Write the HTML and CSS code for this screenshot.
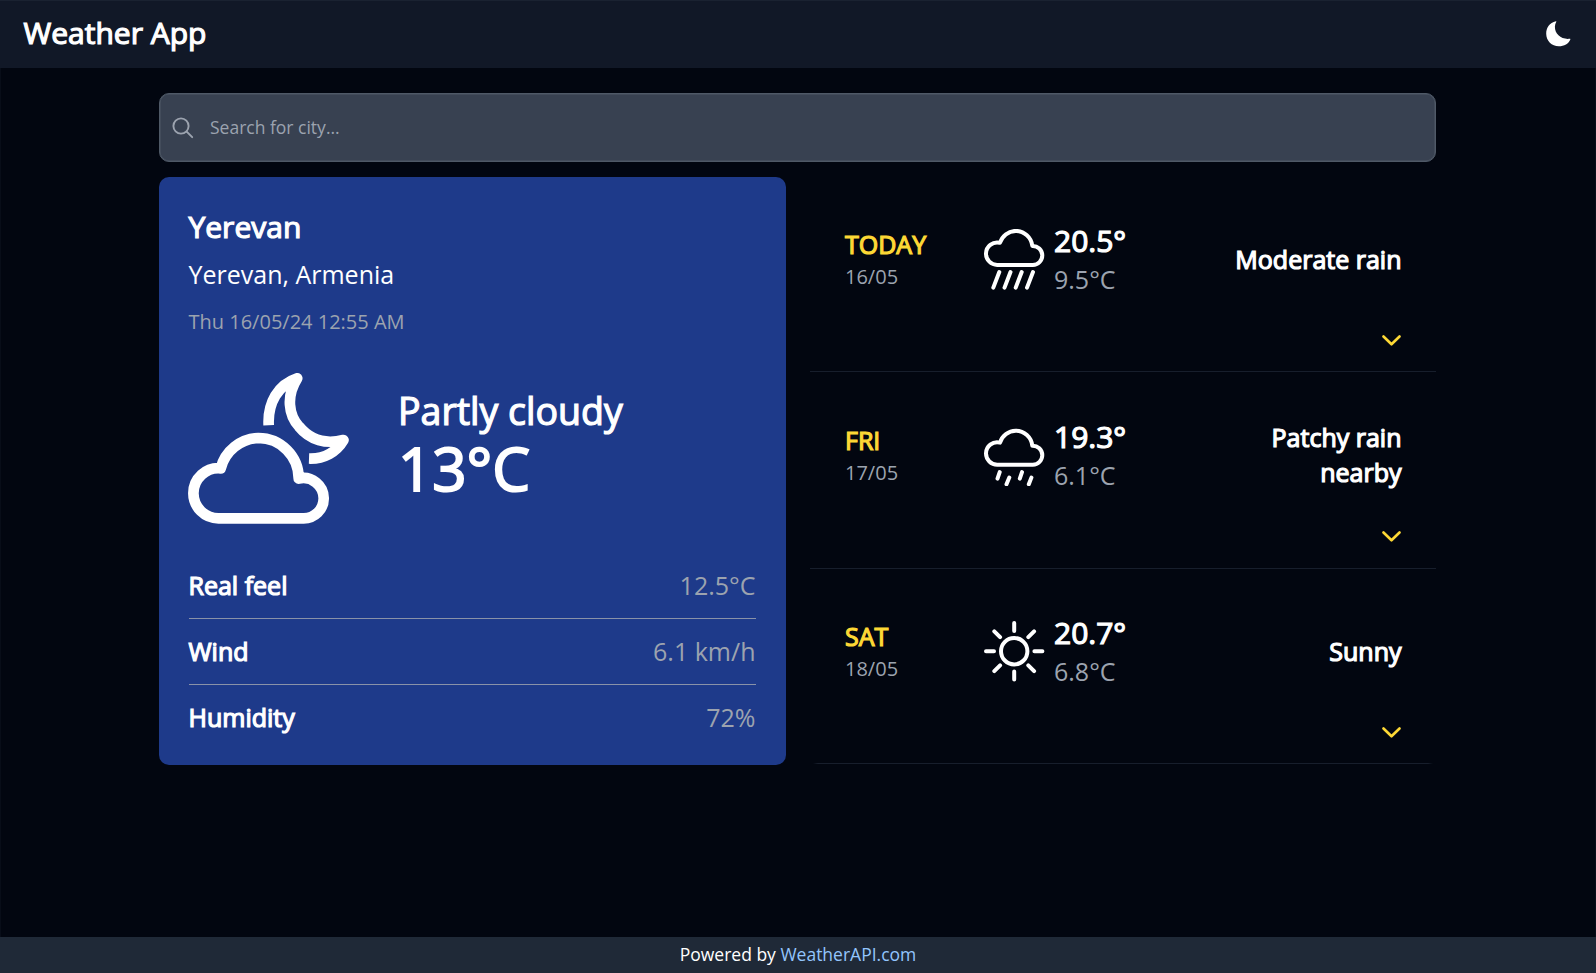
FILE: index.html
```html
<!DOCTYPE html>
<html lang="en">
<head>
<meta charset="utf-8">
<title>Weather App</title>
<link rel="stylesheet" href="styles.css">
</head>
<body>
<header class="header">
  <h1 class="brand">Weather App</h1>
  <svg class="theme-icon" width="25" height="26" viewBox="0 0 25 26"><path fill="#fff" d="M9.900.300C3.500 1.600.200 6.900.200 12.700c0 7 5.500 12.600 12.600 12.600 5.300 0 10.100-2.600 11.600-7 .1-.4-.1-.6-.5-.5C15.600 18.900 8.600 13.400 8.900 5.600c.1-1.800.6-3.300 1.400-4.800.2-.4 0-.6-.4-.5z"/></svg>
</header>
<main class="main">
  <div class="search">
    <svg class="search-icon" width="22" height="22" viewBox="0 0 22 22"><circle cx="9" cy="9" r="7.600"/><path d="M14.700 14.700l5.500 5.500"/></svg>
    <span>Search for city...</span>
  </div>
  <div class="panels">
    <section class="current">
      <h2 class="city">Yerevan</h2>
      <p class="region">Yerevan, Armenia</p>
      <p class="time">Thu 16/05/24 12:55 AM</p>
      <div class="now">
        <svg class="now-icon" width="162" height="152" viewBox="0 0 162 152"><path d="M30.500 145.300A25.100 25.100 0 0 1 5.400 120.300A25.100 25.100 0 0 1 32.700 95.300A40.400 40.400 0 0 1 70.300 65A40.400 40.400 0 0 1 110.700 105.600A20.300 20.300 0 0 1 135.700 125.400A20 20 0 0 1 115.700 145.300Z"/><path d="M80.700 52.300C79.500 30 90 11.500 109.200 5.300C98 23 100.500 42 111 53.500C122 67 138 71.500 155.500 67C148.500 79 136 86 121 85.500"/></svg>
        <div>
          <p class="condition">Partly cloudy</p>
          <p class="temp">13°C</p>
        </div>
      </div>
      <dl class="stats">
        <div class="stat"><dt>Real feel</dt><dd>12.5°C</dd></div>
        <div class="stat"><dt>Wind</dt><dd>6.1 km/h</dd></div>
        <div class="stat"><dt>Humidity</dt><dd>72%</dd></div>
      </dl>
    </section>
    <section class="forecast">
      <article class="day">
        <div class="day-row">
          <div><p class="day-name">TODAY</p><p class="day-date">16/05</p></div>
          <svg class="day-icon" width="61" height="61" viewBox="0 0 61 61"><path d="M13.300 35.900A11.200 11.200 0 0 1 2 24.800A11.200 11.200 0 0 1 16 13.800A16.700 16.700 0 0 1 31.700 1.900A16.700 16.700 0 0 1 48.300 16.900A9.600 9.600 0 0 1 58.300 26.300A9.600 9.600 0 0 1 48.800 35.900Z"/><path d="M15.300 43l-6 15.600M26.500 43l-6 15.600M37.700 43l-6 15.600M49 43l-6 15.600"/></svg>
          <div><p class="high">20.5°</p><p class="low">9.5°C</p></div>
          <p class="summary">Moderate rain</p>
        </div>
        <svg class="chevron" width="19" height="11" viewBox="0 0 19 11"><path d="M1.500 1.500l8 7.800 8-7.800"/></svg>
      </article>
      <article class="day">
        <div class="day-row">
          <div><p class="day-name">FRI</p><p class="day-date">17/05</p></div>
          <svg class="day-icon" width="61" height="61" viewBox="0 0 61 61"><g transform="translate(0 3.800)"><path d="M13.300 35.900A11.200 11.200 0 0 1 2 24.800A11.200 11.200 0 0 1 16 13.800A16.700 16.700 0 0 1 31.700 1.900A16.700 16.700 0 0 1 48.300 16.900A9.600 9.600 0 0 1 58.300 26.300A9.600 9.600 0 0 1 48.800 35.900Z"/><path d="M15.700 43.300l-2.200 6.500M25.300 48.800l-2.800 6.700M38 43.300l-2.200 6.500M47.400 48.800l-2.600 6.700"/></g></svg>
          <div><p class="high">19.3°</p><p class="low">6.1°C</p></div>
          <p class="summary">Patchy rain nearby</p>
        </div>
        <svg class="chevron" width="19" height="11" viewBox="0 0 19 11"><path d="M1.500 1.500l8 7.800 8-7.800"/></svg>
      </article>
      <article class="day">
        <div class="day-row">
          <div><p class="day-name">SAT</p><p class="day-date">18/05</p></div>
          <svg class="day-icon" width="61" height="61" viewBox="0 0 61 61"><circle cx="30.200" cy="30.200" r="13.200"/><path d="M30.200 2v8M30.200 50.400v8M2 30.200h8M50.400 30.200h8M10.300 10.300l5.800 5.800M44.300 44.300l5.800 5.800M10.300 50.100l5.800-5.800M44.300 16.100l5.800-5.800"/></svg>
          <div><p class="high">20.7°</p><p class="low">6.8°C</p></div>
          <p class="summary">Sunny</p>
        </div>
        <svg class="chevron" width="19" height="11" viewBox="0 0 19 11"><path d="M1.500 1.500l8 7.800 8-7.800"/></svg>
      </article>
    </section>
  </div>
</main>
<footer class="footer">Powered by <a class="link" href="#">WeatherAPI.com</a></footer>
</body>
</html>
```
FILE: styles.css
```css
* { box-sizing: border-box; margin: 0; padding: 0; }
body {
  display: flex;
  flex-direction: column;
  height: 973px;
  background: #020610;
  color: #fff;
  font: 400 25px/35px "Open Sans", "Noto Sans", sans-serif;
  overflow: hidden;
}
svg { display: block; flex: none; fill: none; stroke-linejoin: round; stroke-linecap: round; }
.brand, .city, .condition, .temp, .stat dt, .day-name, .high, .summary {
  font-weight: 400;
  -webkit-text-stroke: 1.2px currentColor;
}
.header {
  display: flex;
  justify-content: space-between;
  align-items: center;
  height: 68px;
  padding: 0 25px 0 23.5px;
  background: #111827;
  border-top: 1px solid #1a2231;
}
.brand { font-size: 30px; line-height: 40px; margin-bottom: 3px; }
.theme-icon { margin-bottom: 1px; }
.main {
  flex: 1;
  padding: 25px 159px 0 158px;
  border: solid #080d18;
  border-width: 0 1px;
}
.search {
  display: flex;
  align-items: center;
  gap: 16px;
  height: 69px;
  padding: 0 12px;
  background: #384151;
  border: 1.5px solid #4f5967;
  box-shadow: inset 0 0 0 0.5px #4f5967;
  border-radius: 10px;
  color: #9ca3af;
  font-size: 17.5px;
  line-height: 25px;
}
.search-icon { stroke: #9ca3af; stroke-width: 1.9; }
.panels {
  display: grid;
  grid-template-columns: 626.5px 626px;
  gap: 24.5px;
  margin-top: 15px;
}
.current {
  height: 588px;
  padding: 30px 30px 30px 29.5px;
  background: #1e3a8a;
  border-radius: 10px;
}
.city { font-size: 30px; line-height: 40px; }
.region { margin-top: 9.500px; }
.time { margin-top: 15px; font-size: 20px; line-height: 30px; color: #9ca3af; }
.now {
  display: flex;
  gap: 48px;
  height: 152px;
  margin: 36px 0 43.500px -0.5px;
}
.now-icon { stroke: #fff; stroke-width: 10.7; stroke-linecap: butt; }
.condition { margin-top: 15px; font-size: 37.5px; line-height: 45px; }
.temp { margin-top: 5px; font-size: 60px; line-height: 60px; -webkit-text-stroke-width: 2px; }
.stat {
  display: flex;
  justify-content: space-between;
  height: 66px;
}
.stat + .stat { padding-top: 14.500px; border-top: 1px solid #8992a8; }
.stat:first-child { height: 50px; }
.stat dd { color: #9ca3af; }
.day {
  display: flex;
  flex-direction: column;
  height: 196px;
  padding: 44.500px 34.5px 0 35px;
  border-bottom: 1px solid #171e2c;
}
.day:first-child { height: 195px; }
.day:nth-child(2) { height: 197px; padding-top: 45.500px; }
.day:last-child {
  height: 195px;
  border-image: linear-gradient(90deg, transparent 4px, #171e2c 9px, #171e2c calc(100% - 9px), transparent calc(100% - 4px)) 1;
}
.day-row {
  display: grid;
  grid-template-columns: 139px 70px 150px 1fr;
  align-items: center;
  height: 75px;
}
.day-name { color: #fdd835; }
.day-date { font-size: 20px; line-height: 30px; color: #9ca3af; }
.day-icon { stroke: #fff; stroke-width: 4; }
.high { margin: -1px 0 1px; font-size: 30px; line-height: 40px; }
.low { color: #9ca3af; }
.summary { text-align: right; }
.chevron { align-self: flex-end; margin: 38.500px 0.8px 0 0; stroke: #fdd835; stroke-width: 2.6; }
.footer {
  height: 36px;
  padding-top: 5px;
  background: #1f2937;
  text-align: center;
  font-size: 17.5px;
  line-height: 25px;
}
.link { color: #93c5fd; text-decoration: none; }
```
